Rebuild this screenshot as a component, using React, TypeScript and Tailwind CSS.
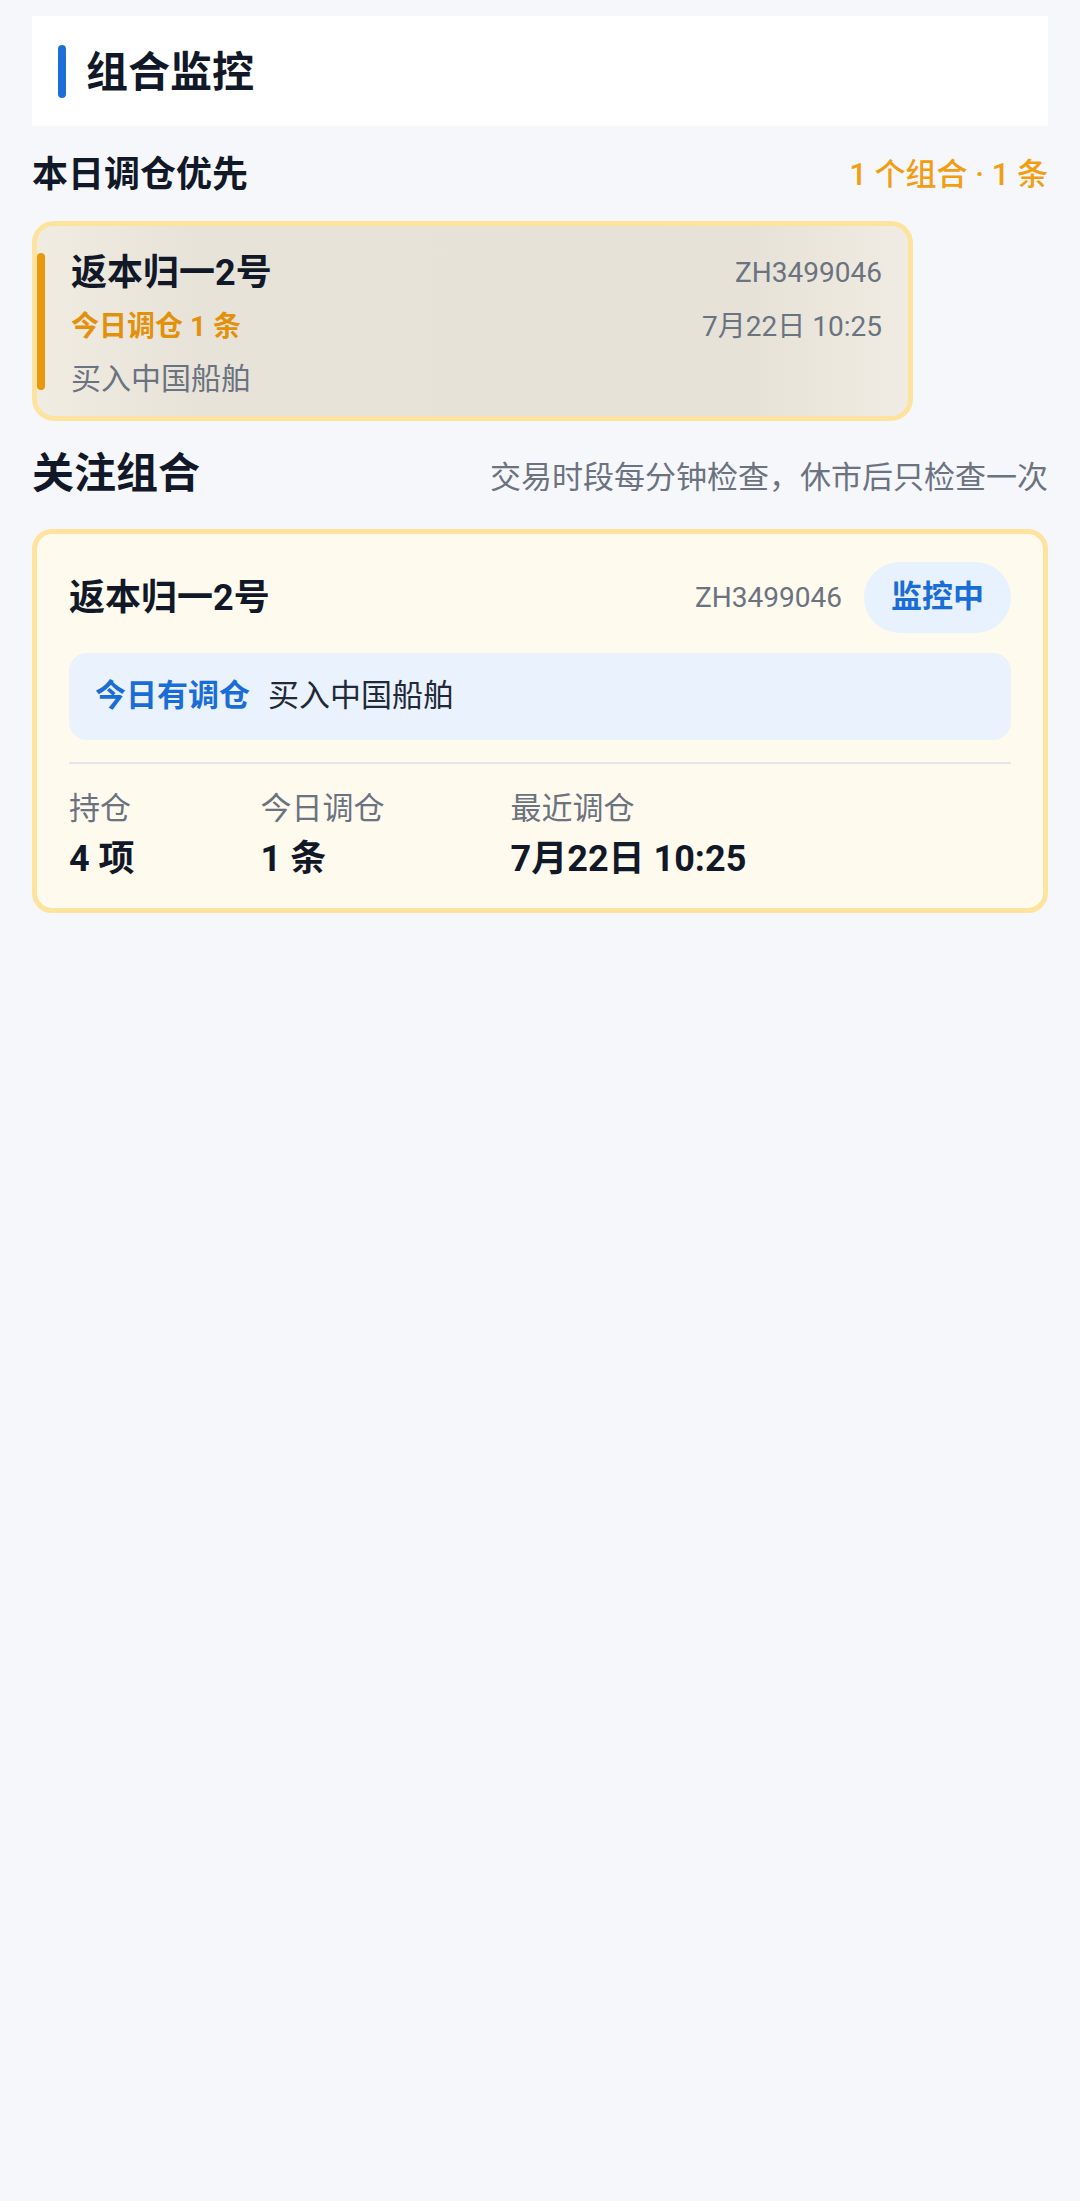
import React from "react";

export default function App() {
  return (
    <div
      className="min-h-[2201px] w-full bg-[#f6f7fb] px-8 pt-4"
      style={{ fontFamily: 'Roboto, "Noto Sans CJK SC", sans-serif' }}
    >
      {/* Header */}
      <div className="flex h-[110px] items-center bg-white pl-[26px]">
        <div className="h-[53px] w-2 rounded-full bg-[#1a6fd8]" />
        <div className="ml-5 mt-[3px] text-[42px] font-bold leading-none text-[#111827]">组合监控</div>
      </div>

      {/* Priority section */}
      <div className="mt-6 flex h-[50px] items-center justify-between">
        <div className="text-[36px] font-bold leading-[50px] text-[#111827]">本日调仓优先</div>
        <div className="text-[31px] font-medium leading-[50px] text-[#f29d12]">1 个组合 · 1 条</div>
      </div>

      <div className="relative mt-[21px] w-[881px] rounded-[22px] border-[5px] border-[#fee39f] bg-[linear-gradient(90deg,#f0ece2_0%,#e7e3d9_18%,#e6e2d7_82%,#f0ece3_100%)] pb-[17px] pl-[34px] pr-[26px] pt-[23px]">
        <div className="absolute left-0 top-[27px] h-[137px] w-2 rounded-full bg-[#e9970c]" />
        <div className="flex h-[48px] items-center justify-between">
          <div className="text-[36px] font-bold leading-[48px] text-[#111827]">返本归一2号</div>
          <div className="text-[28px] leading-[48px] text-[#6b7280]">ZH3499046</div>
        </div>
        <div className="mt-[11px] flex h-[38px] items-center justify-between">
          <div className="text-[28px] font-bold leading-[38px] text-[#e3910c]">今日调仓 1 条</div>
          <div className="text-[28px] leading-[38px] text-[#6b7280]">7月22日 10:25</div>
        </div>
        <div className="mt-[13px] text-[30px] leading-[40px] text-[#6b7280]">买入中国船舶</div>
      </div>

      {/* Watch section */}
      <div className="mt-[25px] flex items-baseline justify-between">
        <div className="text-[42px] font-bold leading-[56px] text-[#111827]">关注组合</div>
        <div className="text-[31px] leading-[56px] text-[#6b7280]">交易时段每分钟检查，休市后只检查一次</div>
      </div>

      <div className="mt-[23px] rounded-[20px] border-[5px] border-[#fee39f] bg-[#fffaee] px-8 pb-[27px] pt-[28px]">
        <div className="flex h-[71px] items-center justify-between">
          <div className="text-[36px] font-bold leading-none text-[#111827]">返本归一2号</div>
          <div className="flex items-center gap-[22px]">
            <div className="text-[28px] leading-none text-[#6b7280]">ZH3499046</div>
            <div className="flex h-[71px] items-center rounded-full bg-[#e8f1fe] px-[27px] text-[31px] font-bold text-[#1a6dd6]">
              监控中
            </div>
          </div>
        </div>

        <div className="mt-[20px] flex h-[87px] items-center gap-[18px] rounded-[18px] bg-[#eaf2fe] px-[26px]">
          <div className="text-[31px] font-bold text-[#1a6dd6]">今日有调仓</div>
          <div className="text-[31px] text-[#1f2937]">买入中国船舶</div>
        </div>

        <div className="mt-[22px] h-[2px] bg-[#e3e5ea]" />

        <div className="mt-[24px] flex gap-[126px]">
          <div className="flex flex-col">
            <div className="text-[31px] leading-[42px] text-[#6b7280]">持仓</div>
            <div className="mt-[7px] text-[36px] font-bold leading-[44px] text-[#111827]">4 项</div>
          </div>
          <div className="flex flex-col">
            <div className="text-[31px] leading-[42px] text-[#6b7280]">今日调仓</div>
            <div className="mt-[7px] text-[36px] font-bold leading-[44px] text-[#111827]">1 条</div>
          </div>
          <div className="flex flex-col">
            <div className="text-[31px] leading-[42px] text-[#6b7280]">最近调仓</div>
            <div className="mt-[7px] text-[36px] font-bold leading-[44px] text-[#111827]">7月22日 10:25</div>
          </div>
        </div>
      </div>
    </div>
  );
}
